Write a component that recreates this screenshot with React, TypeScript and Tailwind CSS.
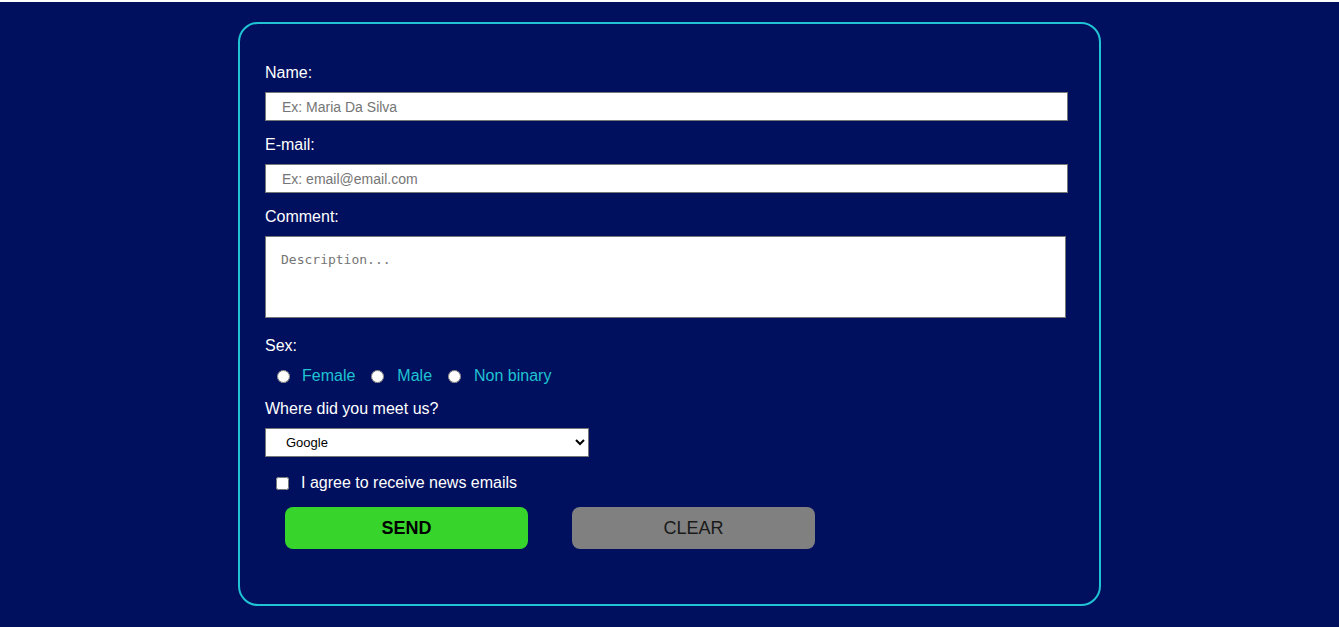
import * as React from "react";

export default function App() {
  return (
    <div className="min-h-[627px] bg-[#000f5e] border-t-2 border-white font-['Liberation_Sans',Arial,sans-serif]">
      <div className="pt-5">
        <form
          className="mx-auto w-[863px] h-[584px] rounded-[20px] border-2 border-[#1fc3d3] pl-[25px] pr-[31px] pt-[40px]"
          onSubmit={(e) => e.preventDefault()}
        >
          <label className="block text-white text-base leading-[18px]">Name:</label>
          <input
            type="text"
            placeholder="Ex: Maria Da Silva"
            className="mt-[10px] block w-full h-[29px] bg-white border border-[#767676] pl-4 text-sm text-black placeholder:text-[#757575] outline-none"
          />

          <label className="mt-[15px] block text-white text-base leading-[18px]">E-mail:</label>
          <input
            type="email"
            placeholder="Ex: email@email.com"
            className="mt-[10px] block w-full h-[29px] bg-white border border-[#767676] pl-4 text-sm text-black placeholder:text-[#757575] outline-none"
          />

          <label className="mt-[15px] block text-white text-base leading-[18px]">Comment:</label>
          <textarea
            placeholder="Description..."
            className="mt-[10px] block w-[801px] h-[82px] bg-white border border-[#767676] px-[15px] pt-[13px] text-[13px] font-['DejaVu_Sans_Mono',monospace] placeholder:text-[#757575] outline-none resize-none"
          />

          <label className="mt-[19px] block text-white text-base leading-[18px]">Sex:</label>
          <div className="mt-[12px] flex items-center h-[18px] pl-[12px] text-base text-[#1fc3d3]">
            <input type="radio" name="sex" className="w-[13px] h-[13px] m-0 accent-white" />
            <span className="ml-[12px]">Female</span>
            <input type="radio" name="sex" className="ml-[16px] w-[13px] h-[13px] m-0 accent-white" />
            <span className="ml-[13px]">Male</span>
            <input type="radio" name="sex" className="ml-[16px] w-[13px] h-[13px] m-0 accent-white" />
            <span className="ml-[13px]">Non binary</span>
          </div>

          <label className="mt-[15px] block text-white text-base leading-[18px]">Where did you meet us?</label>
          <select className="mt-[10px] block w-[324px] h-[29px] bg-white border border-[#767676] pl-4 text-[13px] text-black outline-none">
            <option>Google</option>
            <option>Facebook</option>
            <option>Instagram</option>
            <option>Friends</option>
          </select>

          <div className="mt-[17px] flex items-center h-[18px] pl-[11px]">
            <input type="checkbox" className="w-[13px] h-[13px] m-0" />
            <span className="ml-[12px] text-white text-base">I agree to receive news emails</span>
          </div>

          <div className="mt-[15px] flex gap-[44px] pl-[20px]">
            <button
              type="submit"
              className="w-[243px] h-[42px] rounded-lg bg-[#37d52c] text-black text-lg font-bold"
            >
              SEND
            </button>
            <button
              type="reset"
              className="w-[243px] h-[42px] rounded-lg bg-[#808080] text-[#1a1a1a] text-lg"
            >
              CLEAR
            </button>
          </div>
        </form>
      </div>
    </div>
  );
}
